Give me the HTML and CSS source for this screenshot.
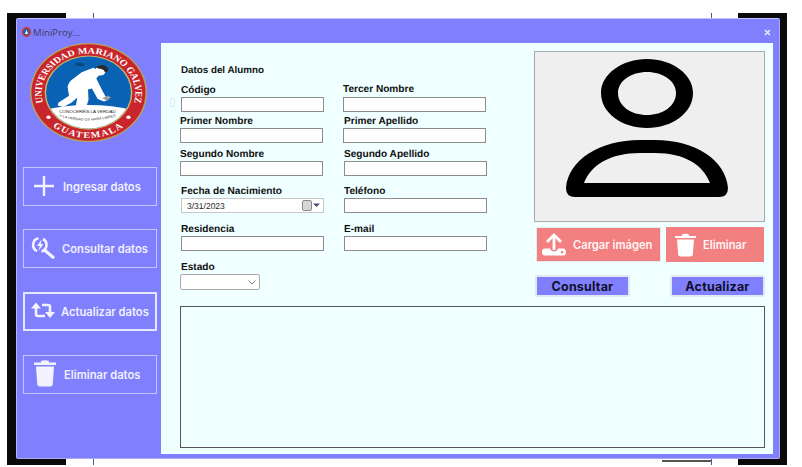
FILE: index.html
```html
<!DOCTYPE html>
<html lang="en">
<head>
  <meta charset="UTF-8">
  <meta name="viewport" content="width=device-width, initial-scale=1.0">
  <title>MiniProyecto</title>
  <link rel="stylesheet" href="styles.css">
</head>
<body>
  <!-- desktop behind the window -->
  <div class="desk-block desk-left"></div>
  <div class="desk-block desk-right"></div>
  <div class="desk-line line-a"></div>
  <div class="desk-line line-b"></div>
  <div class="desk-line line-c"></div>
  <div class="desk-line line-d"></div>
  <div class="desk-bar"></div>

  <div class="window">
    <div class="titlebar">
      <svg class="title-icon" width="9" height="10" viewBox="0 0 9 10">
        <ellipse cx="4.5" cy="5" rx="4.5" ry="5" fill="#c8342f"/>
        <ellipse cx="4.5" cy="5" rx="2.8" ry="3.2" fill="#1f66b0"/>
        <path d="M3 7 L4.5 3 L6 7Z" fill="#fff"/>
      </svg>
      <span class="title-text">MiniProy...</span>
      <svg class="close-icon" width="7" height="7" viewBox="0 0 7 7">
        <path d="M1 1 L6 6 M6 1 L1 6" stroke="#e8e8f4" stroke-width="1.6"/>
      </svg>
    </div>
    <div class="window-body">
      <aside class="sidebar">
        <svg class="seal" width="117" height="99" viewBox="0 0 120 120" preserveAspectRatio="none">
          <defs>
            <path id="arcTop" d="M16 80 A48 48 0 1 1 104 80"/>
            <path id="arcBottom" d="M8 78 A55 55 0 0 0 112 78"/>
            <path id="arcMotto" d="M27 88 Q58 100 91 88"/>
            <clipPath id="innerClip"><circle cx="60" cy="60" r="43.5"/></clipPath>
          </defs>
          <circle cx="60" cy="60" r="60" fill="#b9a45a"/>
          <circle cx="60" cy="60" r="58.5" fill="#c8262c"/>
          <circle cx="60" cy="60" r="45" fill="#c9b56a"/>
          <circle cx="60" cy="60" r="43.5" fill="#0a62b4"/>
          <g clip-path="url(#innerClip)">
            <path d="M10 83 Q30 75 60 75 Q90 75 110 83 V110 H10Z" fill="#fff"/>
          </g>
          <path d="M28.4 75.9 L29.1 72.5 L40 64 L38.5 53 Q39.5 47 44 43.5 L53 35.5 L65 30 L73 36 L68 43 L74.5 58.5 L79.5 69 L76 71 L69.5 68 L63.5 55 L59.5 56.5 L60 69 L57.5 78 L47 76 L48.5 66 L42.8 72 L34.2 77.5Z" fill="#fff"/>
          <circle cx="72" cy="34" r="5.5" fill="#fff"/>
          <path d="M67.5 29.5 Q70 26.5 75 27 Q80.5 28.5 80 33 Q79 36 77 35.5 Q76 32 73 31.5 Q70 31.5 67.5 29.5Z" fill="#2a2a2a"/>
          <path d="M74 67 L80 63.5 L83 66 L79 70Z" fill="#9aa0a8"/>
          <text class="seal-year" x="51" y="28" text-anchor="middle">1966</text>
          <text class="seal-ring"><textPath href="#arcTop" startOffset="50%" text-anchor="middle">UNIVERSIDAD MARIANO GALVEZ</textPath></text>
          <text class="seal-ring seal-city"><textPath href="#arcBottom" startOffset="50%" text-anchor="middle">GUATEMALA</textPath></text>
          <text class="seal-motto" x="59" y="85" text-anchor="middle">CONOCERÉIS LA VERDAD</text>
          <text class="seal-motto seal-motto-low"><textPath href="#arcMotto" startOffset="50%" text-anchor="middle">Y LA VERDAD OS HARÁ LIBRES</textPath></text>
          <circle cx="19" cy="90" r="2.2" fill="#fff"/>
          <circle cx="101" cy="90" r="2.2" fill="#fff"/>
        </svg>

        <button class="nav-btn nav-first">
          <svg width="39" height="37" viewBox="0 0 39 37"><path d="M20 8 V28 M10 18 H30" stroke="#f3f3ff" stroke-width="2.4" fill="none"/></svg>
          <span>Ingresar datos</span>
        </button>
        <button class="nav-btn">
          <svg width="38" height="37" viewBox="0 0 38 37">
            <path d="M14.5 8.2 A6.8 6.8 0 0 0 13 21 M17.5 21.5 A6.8 6.8 0 0 0 19 9" stroke="#f3f3ff" stroke-width="2.6" fill="none"/>
            <path d="M20.5 20 L29 27.3" stroke="#f3f3ff" stroke-width="3.2" stroke-linecap="round"/>
            <path d="M17.5 9.5 L13 16 H15.7 L14.5 21 L19.5 14 H16.8Z" fill="#f3f3ff"/>
          </svg>
          <span>Consultar datos</span>
        </button>
        <button class="nav-btn nav-active">
          <svg width="36" height="35" viewBox="0 0 36 35">
            <path d="M11 13 V20 Q11 22 13 22 H20 M17 11 H23 Q25 11 25 13 V19" stroke="#f3f3ff" stroke-width="2.6" fill="none"/>
            <path d="M6 14.5 L11 8.5 L16 14.5Z M20 18 L25 24 L30 18Z" fill="#f3f3ff"/>
          </svg>
          <span>Actualizar datos</span>
        </button>
        <button class="nav-btn">
          <svg width="40" height="37" viewBox="0 0 40 37">
            <path d="M10 6.5 H32 V9 H10Z M17 5 Q21 3.5 25 5 V6.5 H17Z" fill="#f3f3ff"/>
            <path d="M12 10.5 H30 L28.7 28.5 Q28.5 30.5 26 30.5 H16 Q13.5 30.5 13.3 28.5Z" fill="#f3f3ff"/>
          </svg>
          <span>Eliminar datos</span>
        </button>
      </aside>

      <main class="panel">
        <div class="panel-top">
          <form class="form">
            <div class="form-title">Datos del Alumno</div>
            <div class="form-spacer"></div>

            <div class="field field-code">
              <span class="stub"></span>
              <label>Código</label>
              <input type="text">
            </div>
            <div class="field shift-l1 raise">
              <label>Tercer Nombre</label>
              <input type="text">
            </div>

            <div class="field shift-l1">
              <label>Primer Nombre</label>
              <input type="text">
            </div>
            <div class="field shift-l1">
              <label class="shift-r1">Primer Apellido</label>
              <input type="text">
            </div>

            <div class="field shift-l1">
              <label>Segundo Nombre</label>
              <input type="text">
            </div>
            <div class="field">
              <label>Segundo Apellido</label>
              <input type="text">
            </div>

            <div class="field">
              <label>Fecha de Nacimiento</label>
              <div class="date-box">
                <span>3/31/2023</span>
                <svg width="19" height="11" viewBox="0 0 19 11">
                  <rect x="0.5" y="0.5" width="9" height="10" rx="1.5" fill="#d6d6d6" stroke="#8a8a8a"/>
                  <path d="M11 3.5 H18 L14.5 7Z" fill="#44506e"/>
                </svg>
              </div>
            </div>
            <div class="field">
              <label>Teléfono</label>
              <input type="text">
            </div>

            <div class="field">
              <label>Residencia</label>
              <input type="text">
            </div>
            <div class="field">
              <label>E-mail</label>
              <input type="text">
            </div>

            <div class="field shift-l1">
              <label class="shift-r1">Estado</label>
              <div class="combo">
                <svg width="8" height="5" viewBox="0 0 8 5"><path d="M0.5 0.5 L4 4 L7.5 0.5" stroke="#777" fill="none"/></svg>
              </div>
            </div>
          </form>

          <section class="side">
            <div class="photo">
              <svg width="229" height="169" viewBox="535 52 229 169">
                <path fill-rule="evenodd" d="M647 59 C672 59 693 74 693 93 C693 113 672 128 647 128 C622 128 601 113 601 93 C601 74 622 59 647 59Z M647 72 C631 72 618 81 618 93 C618 106 631 115 647 115 C663 115 676 106 676 93 C676 81 663 72 647 72Z"/>
                <path fill-rule="evenodd" d="M575 197 H719 Q728 197 728 188 C726 160 695 140 655 140 H640 C600 140 568 160 566 188 Q566 197 575 197Z M584 183 H710 C703 165 685 153 655 153 H640 C610 153 591 165 584 183Z"/>
              </svg>
            </div>
            <div class="photo-actions">
              <button class="red-btn red-load">
                <svg width="24" height="24" viewBox="0 0 24 24">
                  <path d="M12 17 V3" stroke="#fff" stroke-width="2.8" fill="none"/>
                  <path d="M5 9 L12 2 L19 9" stroke="#fff" stroke-width="2.8" fill="none"/>
                  <path fill-rule="evenodd" d="M3 15.5 H8 Q9 18.5 12 18.5 Q15 18.5 16 15.5 H21 Q24 15.5 24 19 Q24 22.5 21 22.5 H3 Q0 22.5 0 19 Q0 15.5 3 15.5Z M20 18 A1.3 1.3 0 1 0 20 20.6 A1.3 1.3 0 1 0 20 18Z" fill="#fff"/>
                </svg>
                <span>Cargar imágen</span>
              </button>
              <button class="red-btn red-delete">
                <svg width="22" height="24" viewBox="0 0 22 24">
                  <path d="M0 3 H21 V5 H0Z M7 1.5 Q10.5 0 14 1.5 V3 H7Z" fill="#fff"/>
                  <path d="M2 6.5 H19 L17.8 21.5 Q17.6 23.5 15.5 23.5 H5.5 Q3.4 23.5 3.2 21.5Z" fill="#fff"/>
                </svg>
                <span>Eliminar</span>
              </button>
            </div>
            <div class="query-actions">
              <button class="blue-btn">Consultar</button>
              <button class="blue-btn">Actualizar</button>
            </div>
          </section>
        </div>
        <div class="output"></div>
      </main>
    </div>
  </div>
</body>
</html>
```

FILE: styles.css
```css
html, body {
  margin: 0;
  padding: 0;
}
body {
  width: 802px;
  height: 467px;
  background: #fff;
  position: relative;
  overflow: hidden;
  font-family: "Liberation Sans", Arial, sans-serif;
}

/* desktop */
.desk-block {
  position: absolute;
  top: 13px;
  height: 452px;
  background: #0a0a0a;
}
.desk-left {
  left: 7px;
  width: 59px;
}
.desk-right {
  left: 738px;
  width: 49px;
}
.desk-line {
  position: absolute;
  width: 1px;
  height: 6px;
  background: #3d5c9c;
}
.line-a { left: 93px; top: 13px; }
.line-b { left: 711px; top: 13px; }
.line-c { left: 93px; top: 459px; }
.line-d { left: 711px; top: 459px; }
.desk-bar {
  position: absolute;
  left: 662px;
  top: 460px;
  width: 49px;
  height: 2px;
  background: #555;
}

/* window */
.window {
  position: absolute;
  left: 16px;
  top: 18px;
  width: 764px;
  height: 441px;
  box-sizing: border-box;
  background: #8080ff;
  border-top: 1px solid #c3c3ff;
  border-left: 1px solid #b4b4ff;
  border-right: 1px solid #a9a9f5;
  border-bottom: 1px solid #a9a9f5;
  border-radius: 2px;
  display: flex;
  flex-direction: column;
}
.titlebar {
  height: 24px;
  display: flex;
  align-items: center;
  padding: 2px 8px 0 5px;
  box-sizing: border-box;
}
.title-icon {
  margin-right: 2px;
}
.title-text {
  font-family: "Open Sans", sans-serif;
  font-size: 9.6px;
  color: #3c3c5c;
  flex: 1;
}
.window-body {
  display: flex;
  height: 411px;
}

/* sidebar */
.sidebar {
  width: 144px;
  display: flex;
  flex-direction: column;
  padding-left: 6px;
  box-sizing: border-box;
}
.seal {
  margin: 0 0 25px 7px;
  flex: none;
}
.seal-ring {
  font-family: "Liberation Serif", serif;
  font-weight: bold;
  font-size: 10.4px;
  fill: #fff;
}
.seal-city {
  letter-spacing: 1.4px;
}
.seal-motto {
  font-family: "Liberation Sans", sans-serif;
  font-size: 4.6px;
  fill: #222;
}
.seal-motto-low {
  font-size: 3.9px;
}
.seal-year {
  font-family: "Liberation Sans", sans-serif;
  font-size: 4px;
  fill: #111;
}
.nav-btn {
  width: 134px;
  height: 39px;
  margin-top: 24px;
  padding: 0;
  box-sizing: border-box;
  background: transparent;
  border: 1px solid #c6c6ff;
  display: flex;
  align-items: center;
  font-family: Inter, sans-serif;
  font-weight: 600;
  font-size: 11.2px;
  color: #f0f0ff;
  flex: none;
}
.nav-btn svg {
  flex: none;
}
.nav-first {
  margin-top: 0;
  margin-bottom: -1px;
}
.nav-active {
  border: 2px solid #e6e6ff;
}

/* panel */
.panel {
  width: 612px;
  height: 411px;
  background: #f0ffff;
  box-sizing: border-box;
  padding: 8px 0 0 19px;
}
.panel-top {
  display: flex;
  height: 255px;
}

.form {
  width: 354px;
  margin-top: 14px;
  display: grid;
  grid-template-columns: 163px 143px;
  grid-template-rows: 19px 31px 33px 37px 38px 38px auto;
  align-content: start;
  color: #111;
  text-rendering: geometricPrecision;
}
.form-title {
  font-weight: bold;
  font-size: 9.8px;
  line-height: 12px;
  padding-left: 1px;
}
.field {
  display: flex;
  flex-direction: column;
  gap: 1px;
  padding-left: 1px;
  position: relative;
}
.field label {
  font-weight: bold;
  padding-top: 1px;
  line-height: 11px;
  font-size: 10.1px;
}
.field input,
.date-box {
  width: 143px;
  height: 15px;
  box-sizing: border-box;
  border: 1px solid #8c8c8c;
  background: #fff;
  padding: 0;
  margin: 0;
  flex: none;
}
.shift-l1 {
  margin-left: -1px;
}
.shift-r1 {
  margin-left: 1px;
}
.raise label {
  margin-top: -1px;
}
.raise input {
  margin-top: 1px;
}
.stub {
  position: absolute;
  left: -10px;
  top: 14px;
  width: 5px;
  height: 9px;
  border: 1px solid #dfe9e9;
  border-radius: 2px;
  box-sizing: border-box;
}
.date-box {
  border-color: #c8c8c8;
  display: flex;
  align-items: center;
  justify-content: space-between;
  padding: 0 2px 0 5px;
  font-size: 8.5px;
  color: #222;
}
.combo {
  width: 80px;
  height: 16px;
  box-sizing: border-box;
  border: 1px solid #aaa;
  border-radius: 2px;
  background: #fff;
  display: flex;
  align-items: center;
  justify-content: flex-end;
  padding-right: 3px;
}

/* right column */
.side {
  width: 231px;
}
.photo {
  width: 231px;
  height: 171px;
  box-sizing: border-box;
  background: #efefef;
  border: 1px solid #a8aaa8;
}
.photo svg {
  display: block;
}
.photo-actions {
  display: flex;
  margin: 5px 0 0 2px;
  gap: 5px;
}
.red-btn {
  height: 35px;
  padding: 0;
  box-sizing: border-box;
  background: #f28080;
  border: 1px solid #e4ebee;
  display: flex;
  align-items: center;
  font-family: Inter, sans-serif;
  font-weight: 600;
  font-size: 11.2px;
  color: #fff6f6;
}
.red-load {
  width: 125px;
  padding-left: 5px;
  gap: 7px;
}
.red-delete {
  width: 98px;
  padding-left: 8px;
  gap: 6px;
  border-color: #f28080;
}
.query-actions {
  display: flex;
  justify-content: space-between;
  margin: 13px 0 0 1px;
}
.blue-btn {
  width: 95px;
  height: 22px;
  padding: 0;
  box-sizing: border-box;
  background: #8080ff;
  border: 2px solid #e2e8f0;
  border-radius: 2px;
  font-family: Inter, sans-serif;
  font-weight: 700;
  font-size: 12.5px;
  letter-spacing: 0.2px;
  color: #10102a;
}
.output {
  width: 585px;
  height: 142px;
  box-sizing: border-box;
  border: 1px solid #555;
}
```
